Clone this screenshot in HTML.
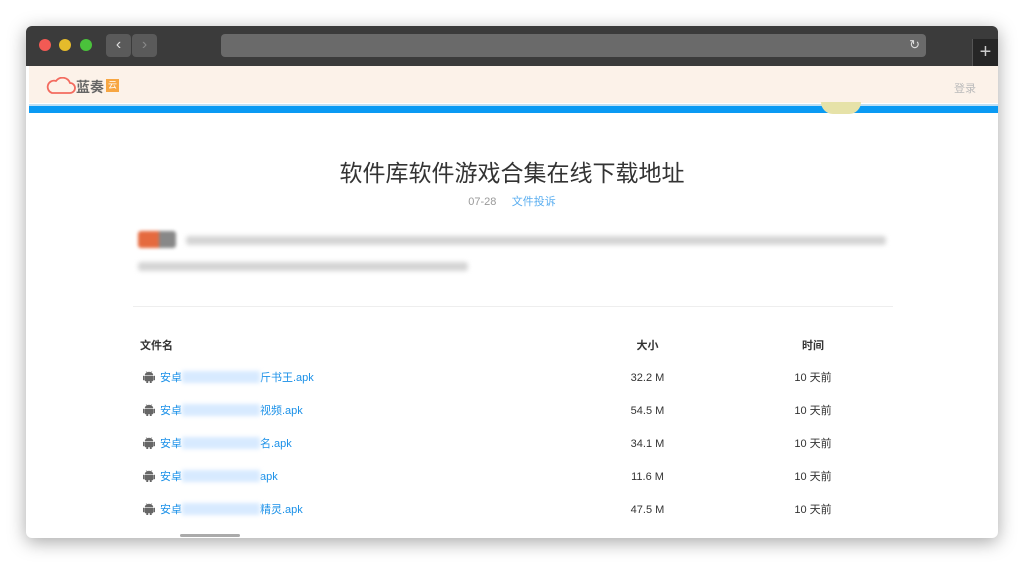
<!DOCTYPE html>
<html><head><meta charset="utf-8"><style>
*{margin:0;padding:0;box-sizing:border-box}
body{width:1024px;height:564px;background:#fff;font-family:"Liberation Sans","Noto Sans CJK SC",sans-serif;position:relative;overflow:hidden}
.win{position:absolute;left:26px;top:26px;width:972px;height:512px;border-radius:6px;overflow:hidden;box-shadow:0 4px 18px rgba(0,0,0,.35);background:#fff}
.tb{position:absolute;left:0;top:0;width:972px;height:40px;background:#3b3b3b}
.dot{position:absolute;top:13px;width:12px;height:12px;border-radius:50%}
.btn{position:absolute;top:8px;height:23px;width:25px;background:#5a5a5a;border-radius:4px;color:#ddd;font-size:16px;text-align:center;line-height:22px}
.url{position:absolute;left:195px;top:8px;width:705px;height:23px;background:#6a6a6a;border-radius:4px}
.plus{position:absolute;left:946px;top:13px;width:26px;height:27px;background:#262626;border-left:1px solid #555;color:#ccc;font-size:20px;text-align:center;line-height:26px}
.hd{position:absolute;left:3px;top:40px;width:969px;height:37px;background:#fcf2e9}
.blue{position:absolute;left:3px;top:78px;width:969px;height:9px;background:#0a9af3;border-top:2px solid #bfe0f5}
h1{position:absolute;left:0;width:1024px;top:158px;text-align:center;font-size:23px;font-weight:normal;color:#333;line-height:30px}
.meta{position:absolute;top:193px;left:0;width:1024px;text-align:center;font-size:11px;color:#999}
.blur{position:absolute;background:#d4d4d4;filter:blur(2.5px);height:9px;border-radius:3px}
.tbl{position:absolute;left:140px;top:338px;width:760px;font-size:11px;color:#333}
.row{position:absolute;left:0;height:16px;width:760px;line-height:16px}
.c1{position:absolute;left:0;top:0;height:16px}.c2{position:absolute;left:470px;width:75px;text-align:center;top:0}.c3{position:absolute;left:640px;width:66px;text-align:center;top:0}
a{color:#1a90e8;text-decoration:none}
.bl{display:inline-block;width:78px;height:12px;background:#d7eaff;filter:blur(2px);vertical-align:-2px}
.and{display:inline-block;vertical-align:-2px;margin:0 5px 0 3px}
</style></head><body>
<div class="win">
<div class="tb">
<div class="dot" style="left:13px;background:#f25a54"></div>
<div class="dot" style="left:33px;background:#e5bb2b"></div>
<div class="dot" style="left:54px;background:#4ac23b"></div>
<div class="btn" style="left:80px">&#8249;</div>
<div class="btn" style="left:106px;color:#888">&#8250;</div>
<div class="url"><span style="position:absolute;right:6px;top:3px;color:#ddd;font-size:13px">&#8635;</span></div>
<div class="plus">+</div>
</div>
<div class="hd">
<svg style="position:absolute;left:17px;top:11px" width="30" height="18" viewBox="0 0 30 18"><path d="M6 16h18a5 5 0 0 0 0-10 8 8 0 0 0-14-2 6 6 0 0 0-4 12z" fill="none" stroke="#f36b5f" stroke-width="1.8"/></svg>
<span style="position:absolute;left:47px;top:11px;font-size:14px;font-weight:bold;color:#666">蓝奏</span>
<span style="position:absolute;left:77px;top:13px;width:13px;height:13px;background:#f7a642;color:#fff;font-size:9px;line-height:13px;text-align:center">云</span>
<span style="position:absolute;left:925px;top:14px;font-size:11px;color:#bbb">登录</span>
</div>
<div class="blue"></div>
<div style="position:absolute;left:795px;top:76px;width:40px;height:12px;background:#e6e2a8;border-radius:0 0 20px 20px"></div>
</div>
<h1>软件库软件游戏合集在线下载地址</h1>
<div class="meta">07-28 &nbsp;&nbsp;&nbsp; <span style="color:#5aaef0">文件投诉</span></div>
<div style="position:absolute;left:138px;top:231px;width:38px;height:17px;background:linear-gradient(90deg,#e56a3f 55%,#888 55%);filter:blur(1.5px);border-radius:3px"></div>
<div class="blur" style="left:186px;top:236px;width:700px"></div>
<div class="blur" style="left:138px;top:262px;width:330px"></div>
<div style="position:absolute;left:133px;top:306px;width:760px;height:1px;background:#eee"></div>
<div class="tbl">
<div class="row" style="top:0;font-weight:bold"><span class="c1">文件名</span><span class="c2">大小</span><span class="c3">时间</span></div>
<div class="row" style="top:32px"><span class="c1"><svg class="and" width="12" height="13" viewBox="0 0 12 13"><path d="M3 1l1 2M9 1l-1 2M2 5a4 3 0 0 1 8 0zM2 6h8v5H2zM0 6h1.4v4H0zM10.6 6H12v4h-1.4zM3.5 11h1.5v2H3.5zM7 11h1.5v2H7z" fill="#666" stroke="#666" stroke-width=".4"/></svg><a>安卓<span class="bl"></span>斤书王.apk</a></span><span class="c2">32.2 M</span><span class="c3">10 天前</span></div>
<div class="row" style="top:65px"><span class="c1"><svg class="and" width="12" height="13" viewBox="0 0 12 13"><path d="M3 1l1 2M9 1l-1 2M2 5a4 3 0 0 1 8 0zM2 6h8v5H2zM0 6h1.4v4H0zM10.6 6H12v4h-1.4zM3.5 11h1.5v2H3.5zM7 11h1.5v2H7z" fill="#666" stroke="#666" stroke-width=".4"/></svg><a>安卓<span class="bl"></span>视频.apk</a></span><span class="c2">54.5 M</span><span class="c3">10 天前</span></div>
<div class="row" style="top:98px"><span class="c1"><svg class="and" width="12" height="13" viewBox="0 0 12 13"><path d="M3 1l1 2M9 1l-1 2M2 5a4 3 0 0 1 8 0zM2 6h8v5H2zM0 6h1.4v4H0zM10.6 6H12v4h-1.4zM3.5 11h1.5v2H3.5zM7 11h1.5v2H7z" fill="#666" stroke="#666" stroke-width=".4"/></svg><a>安卓<span class="bl"></span>名.apk</a></span><span class="c2">34.1 M</span><span class="c3">10 天前</span></div>
<div class="row" style="top:131px"><span class="c1"><svg class="and" width="12" height="13" viewBox="0 0 12 13"><path d="M3 1l1 2M9 1l-1 2M2 5a4 3 0 0 1 8 0zM2 6h8v5H2zM0 6h1.4v4H0zM10.6 6H12v4h-1.4zM3.5 11h1.5v2H3.5zM7 11h1.5v2H7z" fill="#666" stroke="#666" stroke-width=".4"/></svg><a>安卓<span class="bl"></span>apk</a></span><span class="c2">11.6 M</span><span class="c3">10 天前</span></div>
<div class="row" style="top:164px"><span class="c1"><svg class="and" width="12" height="13" viewBox="0 0 12 13"><path d="M3 1l1 2M9 1l-1 2M2 5a4 3 0 0 1 8 0zM2 6h8v5H2zM0 6h1.4v4H0zM10.6 6H12v4h-1.4zM3.5 11h1.5v2H3.5zM7 11h1.5v2H7z" fill="#666" stroke="#666" stroke-width=".4"/></svg><a>安卓<span class="bl"></span>精灵.apk</a></span><span class="c2">47.5 M</span><span class="c3">10 天前</span></div>
</div>
<div style="position:absolute;left:180px;top:534px;width:60px;height:3px;background:#aaa;border-radius:2px"></div>
</body></html>
